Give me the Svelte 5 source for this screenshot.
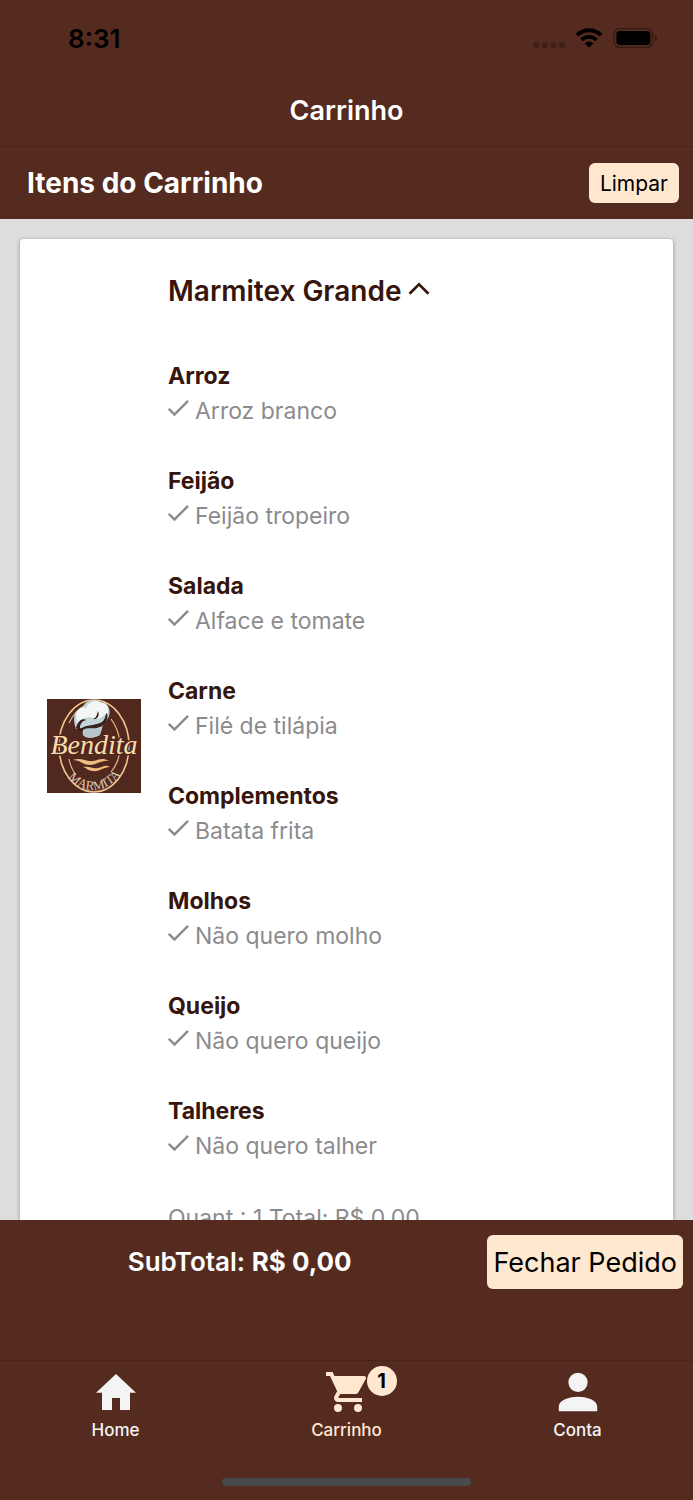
<script>
  const groups = [
    { name: 'Arroz', choice: 'Arroz branco' },
    { name: 'Feijão', choice: 'Feijão tropeiro' },
    { name: 'Salada', choice: 'Alface e tomate' },
    { name: 'Carne', choice: 'Filé de tilápia' },
    { name: 'Complementos', choice: 'Batata frita' },
    { name: 'Molhos', choice: 'Não quero molho' },
    { name: 'Queijo', choice: 'Não quero queijo' },
    { name: 'Talheres', choice: 'Não quero talher' }
  ];
  let open = $state(true);
</script>

<div class="screen">
  <div class="status">
    <span class="clock">8:31</span>
    <div class="signals">
      <svg width="32" height="20" viewBox="0 0 32 20" fill="#3f2018">
        <rect x="0.5" y="14" width="6" height="6" rx="2" />
        <rect x="9" y="14" width="6" height="6" rx="2" />
        <rect x="17.5" y="14" width="6" height="6" rx="2" />
        <rect x="26" y="14" width="6" height="6" rx="2" />
      </svg>
      <svg width="28" height="20" viewBox="0 0 28 20" fill="none" stroke="#000" stroke-width="3.8">
        <path d="M2 7.2A17 17 0 0 1 26 7.2" />
        <path d="M6.6 11.8A10.6 10.6 0 0 1 21.4 11.8" />
        <path d="M9.6 15.2A6.3 6.3 0 0 1 18.4 15.2L14 19.8Z" fill="#000" stroke="none" />
      </svg>
      <svg width="46" height="20" viewBox="0 0 46 20">
        <rect x="1" y="0.6" width="38.6" height="18.8" rx="5.4" fill="none" stroke="#351a12" stroke-width="1.3" />
        <rect x="3.4" y="3" width="34" height="14" rx="3.4" fill="#000" />
        <path d="M42 6.6c2.6 1 2.6 5.8 0 6.8Z" fill="#351a12" />
      </svg>
    </div>
  </div>

  <header class="title"><h1>Carrinho</h1></header>

  <div class="toolbar">
    <h2>Itens do Carrinho</h2>
    <button class="clear">Limpar</button>
  </div>

  <main>
    <article class="card">
      <svg class="logo" viewBox="0 0 94 94" role="img" aria-label="Bendita Marmita">
        <rect width="94" height="94" fill="#51281d" />
        <g fill="none" stroke="#efc48d">
          <ellipse cx="47" cy="47" rx="35" ry="46" stroke-width="1.6" />
          <path d="M22 24C27 14 33 9 37 7M64 20C70 28 73 37 73 48C73 58 69 67 64 73M22 60C23 66 26 72 29 76M20 38C19 43 19 48 20 52" stroke-width="1.1" />
        </g>
        <path d="M29 30C25 19 27 11 36 8C38 1 49-1 54 3C61 3 64 11 62 17C60 23 55 24 55 30L52 36C46 40 38 39 36 36L35 29Z" fill="#c3d4d9" />
        <path d="M29 16C30 10 35 7 39 9C42 2 50 0 54 4C61 4 62 11 61 15C57 14 55 20 49 20C42 16 35 19 30 24Z" fill="#f4f6f6" />
        <path d="M29 29C31 20 37 19 39 21C33 23 33 27 33 30C40 25 48 27 55 23C59 20 58 15 60 14C62 21 57 26 53 28C45 31 38 29 35 33ZM46 20C49 19 50 16 51 12C53 17 50 21 46 20Z" fill="#35211e" />
        <path d="M36 31C43 27 49 32 55 29L53 36C46 40 38 39 36 36Z" fill="#b4c8ce" />
        <text class="brand" x="47" y="55" text-anchor="middle">Bendita</text>
        <path d="M26 61C34 58 39 63 46 62C52 61 55 58 62 62C54 61 50 66 43 66C36 66 33 61 26 61ZM36 68C43 67 45 70 51 69C56 68 58 65 63 68C56 68 53 73 46 72C41 72 40 69 36 68Z" fill="#efbd80" />
        <path id="arc" d="M20 77C34 96 60 96 75 74" fill="none" />
        <text class="sub"><textPath href="#arc" startOffset="50%" text-anchor="middle">MARMITA</textPath></text>
      </svg>

      <div class="details">
        <button class="product" aria-expanded={open} onclick={() => (open = !open)}>
          <span>Marmitex Grande</span>
          <svg class:closed={!open} width="22" height="14" viewBox="0 0 22 14" fill="none" stroke="#35150c" stroke-width="2.7">
            <path d="M1.5 11.8L11 2.3L20.5 11.8" />
          </svg>
        </button>
        {#if open}
          <ul>
            {#each groups as group}
              <li>
                <h3>{group.name}</h3>
                <p>
                  <svg width="24" height="24" viewBox="3.6 3 20 20" fill="#8b8b8e">
                    <path d="M21 7L9 19L3.5 13.5L4.91 12.09L9 16.17L19.59 5.59Z" />
                  </svg>
                  <span>{group.choice}</span>
                </p>
              </li>
            {/each}
          </ul>
        {/if}
        <p class="amount">Quant.: 1 Total: R$ 0,00</p>
      </div>
    </article>
  </main>

  <section class="checkout">
    <p>SubTotal: <strong>R$ 0,00</strong></p>
    <button>Fechar Pedido</button>
  </section>

  <nav>
    <div class="tabs">
      <a href="#home">
        <svg width="48" height="48" viewBox="0 0 24 24"><path d="M10 21V15H14V21H19V12.4H22L12 3L2 12.4H5V21Z" /></svg>
        <span>Home</span>
      </a>
      <a href="#carrinho" class="active" aria-current="page">
        <span class="icon">
          <svg width="48" height="48" viewBox="-0.5 0 24 24">
            <path d="M17 18A2 2 0 1 1 17 22A2 2 0 1 1 17 18M1 2H4.27L5.21 4H20A1 1 0 0 1 21 5C21 5.17 20.95 5.34 20.88 5.5L17.3 11.97C16.96 12.58 16.3 13 15.55 13H8.1L7.2 14.63L7.17 14.75A.25 .25 0 0 0 7.42 15H19V17H7C5.89 17 5 16.1 5 15C5 14.65 5.09 14.32 5.24 14.04L6.6 11.59L3 4H1V2M7 18A2 2 0 1 1 7 22A2 2 0 1 1 7 18" />
          </svg>
          <span class="badge">1</span>
        </span>
        <span>Carrinho</span>
      </a>
      <a href="#conta">
        <svg width="48" height="48" viewBox="2 2 20 20"><path d="M12 4A4 4 0 1 1 12 12A4 4 0 1 1 12 4M12 14C16.42 14 20 15.79 20 18V20H4V18C4 15.79 7.58 14 12 14" /></svg>
        <span>Conta</span>
      </a>
    </div>
    <div class="handle"></div>
  </nav>
</div>

<style>
  :global(body) { margin: 0; background: #552b20; }
  .screen {
    height: 100vh;
    display: flex;
    flex-direction: column;
    background: #552b20;
    color: #fff;
    font-family: Inter, "Liberation Sans", sans-serif;
  }
  h1, h2, h3, p, ul { margin: 0; padding: 0; }
  svg { display: block; flex: none; }
  button { font-family: inherit; border: 0; cursor: pointer; }

  .status {
    display: flex;
    align-items: center;
    justify-content: space-between;
    height: 76px;
    padding: 0 34px 0 68px;
    color: #000;
  }
  .clock { font-size: 26px; font-weight: 600; }
  .signals { display: flex; gap: 10px; }
  .title {
    display: flex;
    align-items: center;
    justify-content: center;
    height: 70px;
    border-bottom: 1px solid #48231a;
  }
  h1 { font-size: 27px; line-height: 34px; font-weight: 600; }
  .toolbar {
    display: flex;
    align-items: center;
    justify-content: space-between;
    height: 72px;
    padding: 0 14px 0 27px;
  }
  h2 { font-size: 28px; line-height: 34px; font-weight: 700; }
  .clear {
    height: 40px;
    padding: 0 11px;
    border-radius: 6px;
    background: #ffe8cf;
    color: #000;
    font-size: 21px;
  }

  main {
    flex: 1;
    min-height: 0;
    padding: 20px;
    overflow-y: auto;
    scrollbar-width: none;
    background: #ddd;
  }
  .card {
    display: flex;
    align-items: center;
    gap: 27px;
    padding: 17px 27px;
    border-radius: 4px;
    background: #fff;
    box-shadow: 0 1px 4px rgb(0 0 0 / 35%);
    color: #35150c;
  }
  .logo { width: 94px; height: 94px; }
  .brand {
    font: italic 28px "Liberation Serif", serif;
    fill: #fbdcae;
    stroke: #51281d;
    stroke-width: 3px;
    paint-order: stroke;
  }
  .sub { font: 13px "Liberation Serif", serif; fill: #d8c6b8; }
  .details { flex: 1; min-width: 0; }
  .product {
    display: flex;
    align-items: center;
    gap: 7px;
    height: 70px;
    padding: 0;
    background: none;
    color: inherit;
    font-size: 28px;
    font-weight: 600;
  }
  .product svg { margin-bottom: 4px; }
  .closed { transform: rotate(180deg); }
  ul {
    display: flex;
    flex-direction: column;
    gap: 35px;
    margin: 33px 0 37px;
    list-style: none;
  }
  h3 { font-size: 23px; line-height: 35px; font-weight: 700; }
  li p, .amount { color: #8b8b8e; font-size: 23px; line-height: 35px; }
  li p { display: flex; gap: 3px; }
  li p svg { margin-top: 3px; }

  .checkout {
    display: flex;
    align-items: flex-start;
    justify-content: space-between;
    height: 125px;
    padding: 15px 10px 0;
  }
  .checkout p {
    flex: 1;
    padding-right: 18px;
    text-align: center;
    font-size: 26px;
    line-height: 54px;
    font-weight: 600;
  }
  .checkout strong { font-weight: 700; }
  .checkout button {
    height: 54px;
    padding: 0 6px;
    border-radius: 6px;
    background: #ffe8cf;
    color: #000;
    font-size: 27px;
  }

  nav {
    display: flex;
    flex-direction: column;
    align-items: center;
    justify-content: space-between;
    height: 118px;
    padding: 7px 0 14px;
    border-top: 1px solid #48231a;
  }
  .tabs { display: flex; align-self: stretch; }
  .tabs a {
    flex: 1;
    display: flex;
    flex-direction: column;
    align-items: center;
    gap: 4px;
    color: #f4f4f4;
    fill: currentColor;
    text-decoration: none;
    font-size: 17px;
    line-height: 20px;
    font-weight: 500;
  }
  .tabs .active { color: #ffe8cf; }
  .icon { position: relative; }
  .badge {
    position: absolute;
    top: -2px;
    left: 44px;
    width: 30px;
    border-radius: 15px;
    background: #ffe8cf;
    color: #000;
    font-size: 20px;
    line-height: 30px;
    font-weight: 700;
    text-align: center;
  }
  .handle { width: 36%; height: 8px; border-radius: 4px; background: #484a49; }
</style>
